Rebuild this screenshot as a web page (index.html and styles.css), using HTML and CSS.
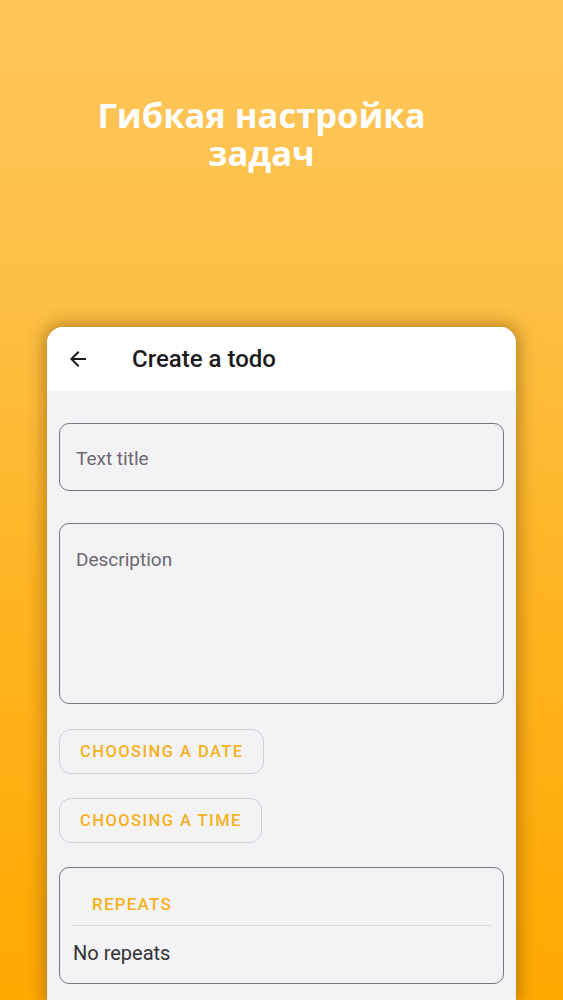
FILE: index.html
```html
<!DOCTYPE html>
<html lang="ru">
<head>
<meta charset="utf-8">
<link rel="stylesheet" href="styles.css">
</head>
<body>
<div class="screen">
  <h1 class="headline"><span class="hl-line">Гибкая настройка</span><span class="hl-line">задач</span></h1>
  <div class="phone">
    <div class="appbar">
      <svg class="back" viewBox="0 0 24 24" width="24" height="24"><path d="M20 11H7.83l5.59-5.59L12 4l-8 8 8 8 1.41-1.41L7.83 13H20v-2z" fill="#1c1b1f"/></svg>
      <span class="appbar-title">Create a todo</span>
    </div>
    <div class="content">
      <div class="field field-title"><span class="placeholder">Text title</span></div>
      <div class="field field-desc"><span class="placeholder">Description</span></div>
      <button class="btn">CHOOSING A DATE</button>
      <button class="btn">CHOOSING A TIME</button>
      <div class="repeats">
        <div class="repeats-head">REPEATS</div>
        <div class="divider"></div>
        <div class="repeats-value">No repeats</div>
      </div>
    </div>
  </div>
</div>
</body>
</html>
```
FILE: styles.css
```css
html, body {
  margin: 0;
  padding: 0;
}
body {
  width: 563px;
  height: 1000px;
  overflow: hidden;
  font-family: Roboto, "Liberation Sans", sans-serif;
}
.screen {
  height: 1000px;
  background: linear-gradient(180deg, #fec65b 0%, #fdbf45 30%, #feb422 60%, #ffa900 100%);
  overflow: hidden;
  display: flex;
  flex-direction: column;
}
.headline {
  margin: 96px 0 0;
  padding-right: 40px;
  font-family: "Open Sans", "Noto Sans", sans-serif;
  font-weight: 700;
  font-size: 34.5px;
  color: #ffffff;
  text-align: center;
  display: flex;
  flex-direction: column;
  align-items: center;
}
.hl-line {
  display: block;
  height: 38px;
  line-height: 38px;
}
.phone {
  margin: 155px 0 0 47px;
  width: 469px;
  flex: 1;
  border-radius: 16px 16px 0 0;
  overflow: hidden;
  background: #f3f2f5;
  box-shadow: 0 0 16px 4px rgba(120, 70, 0, 0.45);
  display: flex;
  flex-direction: column;
}
.appbar {
  height: 64px;
  background: #ffffff;
  display: flex;
  align-items: center;
  flex-shrink: 0;
}
.back {
  margin-left: 19px;
}
.appbar-title {
  margin-left: 42px;
  font-size: 24px;
  color: #1c1b1f;
  font-weight: 500;
}
.content {
  padding: 32px 12px 0;
  display: flex;
  flex-direction: column;
  align-items: flex-start;
}
.field {
  box-sizing: border-box;
  width: 445px;
  border: 1.3px solid #7a767e;
  border-radius: 10px;
  padding-left: 16px;
  display: flex;
}
.field-title {
  height: 68px;
  align-items: center;
  padding-top: 4px;
}
.field-desc {
  margin-top: 32px;
  height: 181px;
  padding-top: 24px;
}
.placeholder {
  font-size: 19px;
  color: #6b6870;
  line-height: 24px;
}
.btn {
  box-sizing: border-box;
  height: 45px;
  padding: 0 19px 0 20px;
  margin-top: 24px;
  background: transparent;
  border: 1px solid #d3d0d6;
  border-radius: 12px;
  font-family: Roboto, "Liberation Sans", sans-serif;
  font-size: 16.5px;
  font-weight: 500;
  letter-spacing: 1.45px;
  color: #f5b11e;
}
.field-desc + .btn {
  margin-top: 25px;
}
.repeats {
  box-sizing: border-box;
  margin-top: 24px;
  width: 445px;
  height: 117px;
  border: 1.3px solid #7a767e;
  border-radius: 10px;
  padding: 0 12px;
}
.repeats-head {
  height: 57px;
  box-sizing: border-box;
  padding: 24px 0 0 20px;
  line-height: 24px;
  font-size: 17px;
  font-weight: 500;
  letter-spacing: 1.2px;
  color: #f5b11e;
}
.divider {
  height: 1px;
  background: #dcdadf;
}
.repeats-value {
  margin-top: 14px;
  margin-left: 1px;
  font-size: 20px;
  line-height: 26px;
  color: #333236;
}
```
